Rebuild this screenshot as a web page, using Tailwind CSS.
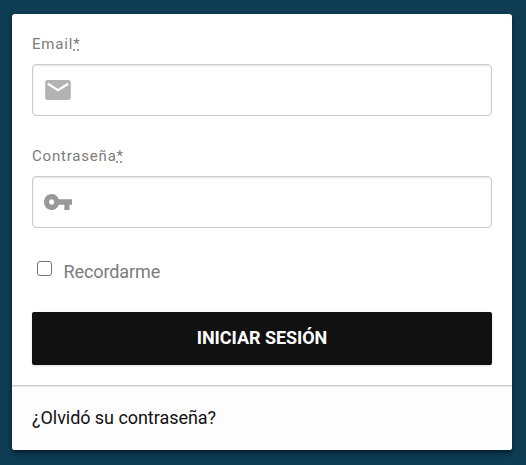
<!DOCTYPE html>
<html lang="es">
<head>
<meta charset="utf-8">
<title>Iniciar sesión</title>
<script src="https://cdn.jsdelivr.net/npm/@tailwindcss/browser@4"></script>
</head>
<body class="min-h-screen overflow-hidden bg-[#0d3c53] px-3 pt-3.5 pr-3.5 font-[Roboto,sans-serif]">
<main class="h-[436px] w-[500px] overflow-hidden rounded-[3px] bg-white shadow-[0_3px_5px_rgba(0,0,0,0.5)]">
  <form class="h-[371px] px-5 pt-5">
    <label for="email" class="block h-[30px] text-[15px] leading-5 tracking-[0.8px] text-[#7c7c7c]">Email<abbr title="Obligatorio" class="underline decoration-dotted">*</abbr></label>
    <div class="flex h-[52px] items-start rounded-[4px] border border-[#ccc] bg-white pt-[15px] pl-3 shadow-[inset_0_1px_2px_rgba(0,0,0,0.1)]">
      <svg class="h-5 w-[26px] shrink-0" viewBox="0 0 26 20"><rect x="0.200" width="25.600" height="20" rx="2.500" fill="#b3b3b3"/><path d="M2.800 3.700L13 10.200L23.200 3.700" fill="none" stroke="#fff" stroke-width="2.300"/></svg>
      <input id="email" type="email" class="h-5 min-w-0 flex-1 bg-transparent pl-3 outline-none">
    </div>
    <label for="password" class="mt-[30px] block h-[30px] text-[15px] leading-5 tracking-[0.8px] text-[#7c7c7c]">Contraseña<abbr title="Obligatorio" class="underline decoration-dotted">*</abbr></label>
    <div class="flex h-[52px] items-start rounded-[4px] border border-[#ccc] bg-white pt-[17px] pl-[11px] shadow-[inset_0_1px_2px_rgba(0,0,0,0.1)]">
      <svg class="h-4 w-7 shrink-0" viewBox="1 6 22 12" preserveAspectRatio="none" fill="#999"><path d="M12.650 10C11.830 7.670 9.610 6 7 6c-3.310 0-6 2.690-6 6s2.690 6 6 6c2.610 0 4.830-1.670 5.650-4H17v4h4v-4h2v-4H12.650zM7 14c-1.100 0-2-.9-2-2s.9-2 2-2 2 .9 2 2-.9 2-2 2z"/></svg>
      <input id="password" type="password" class="h-4 min-w-0 flex-1 bg-transparent pl-3 outline-none">
    </div>
    <label class="mt-[30px] flex h-[54px] items-start pl-[5px] text-[18px] leading-7 tracking-[-0.1px] text-[#7c7c7c]">
      <input type="checkbox" class="mt-[3px] mr-[11.500px] h-[15px] w-[15px] appearance-none rounded-[3px] border border-[#767676] bg-white">
      Recordarme
    </label>
    <button type="button" class="block h-[53px] w-full rounded-[2px] bg-[#111] pb-px text-[18px] leading-[52px] font-bold tracking-[-0.05px] text-white shadow-[0_1px_3px_rgba(0,0,0,0.12)]">INICIAR SESIÓN</button>
  </form>
  <footer class="h-[65px] border-t border-[#ccc] bg-[#fdfdfd] px-5 pt-[18px] shadow-[inset_0_1px_0_#e5e5e5]">
    <a href="#" class="block text-[18px] leading-7 tracking-[-0.05px] text-[#111]">¿Olvidó su contraseña?</a>
  </footer>
</main>
</body>
</html>
